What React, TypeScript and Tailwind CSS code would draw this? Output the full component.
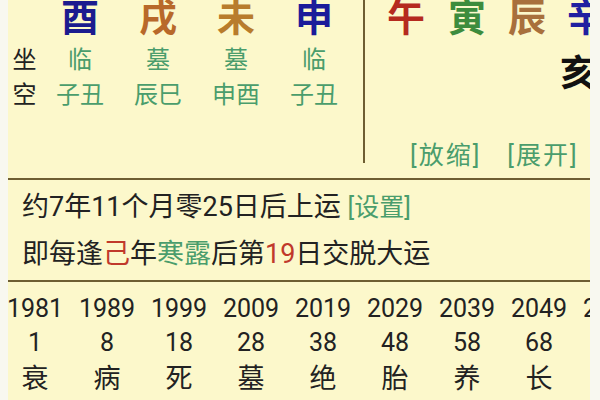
const font = { fontFamily: 'Roboto, "Noto Sans CJK SC", sans-serif' };

interface Pillar {
  stem: string;
  color: string;
  state: string;
  empty: string;
}

const pillars: Pillar[] = [
  { stem: '酉', color: 'text-[#1b1b8f]', state: '临', empty: '子丑' },
  { stem: '戌', color: 'text-[#b8692a]', state: '墓', empty: '辰巳' },
  { stem: '未', color: 'text-[#b87c2c]', state: '墓', empty: '申酉' },
  { stem: '申', color: 'text-[#1b1b9a]', state: '临', empty: '子丑' },
];

const luck = [
  { year: '1981', age: '1', state: '衰' },
  { year: '1989', age: '8', state: '病' },
  { year: '1999', age: '18', state: '死' },
  { year: '2009', age: '28', state: '墓' },
  { year: '2019', age: '38', state: '绝' },
  { year: '2029', age: '48', state: '胎' },
  { year: '2039', age: '58', state: '养' },
  { year: '2049', age: '68', state: '长' },
  { year: '2059', age: '78', state: '沐' },
];

export default function App() {
  return (
    <div className="flex h-[400px] w-[600px] overflow-hidden bg-[#f8f8f0] text-[#222]" style={font}>
      <div className="ml-[8px] flex w-[582px] flex-col overflow-hidden bg-[#fcf8cb]">
        {/* Pillars */}
        <div className="flex h-[180px] shrink-0 border-b-2 border-[#6e5e32]">
          <div className="flex w-[346px] shrink-0 flex-col">
            <div className="-mt-[2px] flex h-[40px] pl-[33px]">
              {pillars.map((p, i) => (
                <div key={i} className={`w-[78px] text-center text-[38px] font-bold leading-[40px] ${p.color}`}>
                  {p.stem}
                </div>
              ))}
            </div>
            <div className="mt-[4px] flex h-[35px] items-center text-[24px] leading-none">
              <div className="w-[33px] text-center">坐</div>
              {pillars.map((p, i) => (
                <div key={i} className="w-[78px] text-center text-[#4a9d6c]">
                  {p.state}
                </div>
              ))}
            </div>
            <div className="flex h-[35px] items-center text-[24px] leading-none">
              <div className="w-[33px] text-center">空</div>
              {pillars.map((p, i) => (
                <div key={i} className="w-[78px] text-center text-[#4a9d6c]">
                  {p.empty}
                </div>
              ))}
            </div>
          </div>
          <div className="ml-[9px] h-[163px] w-[2px] shrink-0 bg-[#6e5e32]" />
          <div className="flex w-[260px] shrink-0 flex-col pl-[11px]">
            <div className="-mt-[2px] flex h-[40px] text-[38px] font-bold leading-[40px]">
              <div className="w-[60px] text-center text-[#b52a1e]">午</div>
              <div className="w-[62px] text-center text-[#3d8c3d]">寅</div>
              <div className="w-[58px] text-center text-[#a8703c]">辰</div>
              <div className="w-[60px] text-center text-[#2020a0]">辛</div>
            </div>
            <div className="mt-[18px] flex h-[36px] text-[36px] font-bold leading-[36px]">
              <div className="ml-[172px] w-[60px] text-center text-[#111]">亥</div>
            </div>
            <div className="mt-[51px] flex gap-[26px] pl-[34px] text-[25px] leading-none tracking-[2px] text-[#4a9d6c]">
              <span>[放缩]</span>
              <span>[展开]</span>
            </div>
          </div>
        </div>

        {/* Luck start */}
        <div className="flex h-[102px] shrink-0 flex-col justify-center gap-[12px] border-b-2 border-[#6e5e32] pl-[14px] text-[27px] leading-[34px]">
          <div>
            约7年11个月零25日后上运 <span className="text-[25px] text-[#4a9d6c]">[设置]</span>
          </div>
          <div>
            即每逢<span className="text-[#c0392b]">己</span>年<span className="text-[#4a9d6c]">寒露</span>后第
            <span className="text-[#c0392b]">19</span>日交脱大运
          </div>
        </div>

        {/* Luck pillars */}
        <div className="-ml-[9px] mt-[10px] flex">
          {luck.map((l, i) => (
            <div key={i} className="flex w-[72px] shrink-0 flex-col items-center">
              <div className="h-[34px] text-[25px] leading-[34px]">{l.year}</div>
              <div className="h-[33px] text-[25px] leading-[33px]">{l.age}</div>
              <div className="h-[40px] text-[27px] leading-[40px]">{l.state}</div>
            </div>
          ))}
        </div>
      </div>
    </div>
  );
}
